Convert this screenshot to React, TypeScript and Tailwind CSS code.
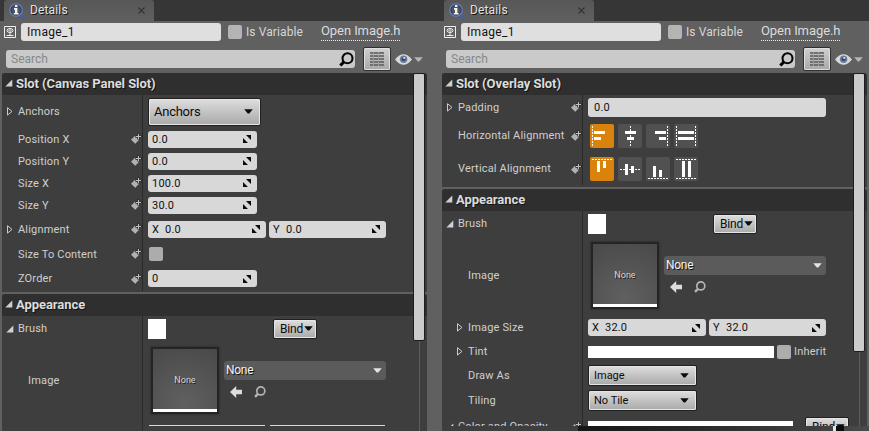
import type { ReactNode } from "react";
import { clsx } from "clsx";

const SHADOW = "[text-shadow:1px_1px_0_#141414]";

function Caret({ className = "" }: { className?: string }) {
  return (
    <svg className={clsx("h-[5px] w-[9px] shrink-0", className)} viewBox="0 0 9 5" fill="currentColor">
      <path d="M0.3 0.3h8.4L5.3 4.5H3.7z" />
    </svg>
  );
}

function Expander({ open }: { open?: boolean }) {
  return open ? (
    <svg className="h-[8px] w-[8px] shrink-0 text-[#d0d0d0]" viewBox="0 0 8 8">
      <path d="M7.3 0.5v7H0.3z" fill="currentColor" />
    </svg>
  ) : (
    <svg className="h-[9px] w-[6px] shrink-0" viewBox="0 0 6 9">
      <path d="M0.5 0.7v7.4L5 4.4z" fill="none" stroke="#cccccc" strokeWidth="1" />
    </svg>
  );
}

function KeyIcon() {
  return (
    <svg className="h-[12px] w-[12px] shrink-0" viewBox="0 0 12 12">
      <path d="M5 2.2L9.6 6.8 5.2 11.2 0.6 6.8z" fill="#b0b0b0" stroke="#262626" strokeWidth="0.6" />
      <path d="M8.5 0v6.4M5.4 3.5h6.6" stroke="#303030" strokeWidth="2.4" />
      <path d="M8.5 1v5M6 3.5h5" stroke="#c0c0c0" strokeWidth="1" />
    </svg>
  );
}

function Spin() {
  return (
    <svg className="h-[8px] w-[8px] shrink-0" viewBox="0 0 8 8" fill="#0a0a0a">
      <path d="M3 0H8v5zM0 3V8h5z" />
      <path d="M2.4 3.4L4.6 5.6M3.4 2.4L5.6 4.6" stroke="#d8d8d8" strokeWidth="0.8" />
    </svg>
  );
}

function Magnifier({ className = "" }: { className?: string }) {
  return (
    <svg className={clsx("shrink-0", className)} viewBox="0 0 15 15" fill="none" stroke="currentColor">
      <circle cx="8.5" cy="6.2" r="5" strokeWidth="2.1" />
      <path d="M5.2 9.6L1.3 13.5" strokeWidth="3" />
    </svg>
  );
}

function DetailsIcon() {
  return (
    <svg className="h-[16px] w-[16px] shrink-0" viewBox="0 0 16 16">
      <path d="M11 11l4 4" stroke="#3e5fae" strokeWidth="2.6" />
      <circle cx="7" cy="7" r="6.2" fill="#4d5360" stroke="#5f82d2" strokeWidth="1.3" />
      <circle cx="7" cy="7" r="5.1" fill="none" stroke="#252b38" strokeWidth="0.6" />
      <path d="M6 2h2.4v2H6zM5 5.1h3.4v4.8h1.2v1.6H4.8V9.9H6V6.7H5z" fill="#f2f2f2" />
    </svg>
  );
}

function WidgetIcon() {
  return (
    <svg className="h-[12px] w-[12px] shrink-0" viewBox="0 0 12 12" fill="none" stroke="#f0f0f0">
      <path d="M0.5 0.5h11v11H0.5z" strokeWidth="1" />
      <ellipse cx="6" cy="4.5" rx="3" ry="2" strokeWidth="1" />
      <path d="M4.5 4.5h1M6.5 4.5h1M5.5 3.5h1M5.5 5.5h1M6 6.5v3M2.5 9.5h7" strokeWidth="1" />
    </svg>
  );
}

function Field({ axis, value, className }: { axis?: string; value: string; className: string }) {
  return (
    <div className={clsx("flex h-[17px] shrink-0 items-center rounded-[3px] bg-[#d8d8d8] pl-[4px] pr-[6px] text-[11px] tracking-[0.2px] text-[#111]", className)}>
      {axis && <span className="w-[13px]">{axis}</span>}
      <span className="flex-1">{value}</span>
      <Spin />
    </div>
  );
}

function Check({ className = "bg-[#acacac]" }: { className?: string }) {
  return <span className={clsx("block size-[14px] shrink-0 rounded-[2px]", className)} />;
}

const BTN =
  "flex shrink-0 items-center rounded-[2px] border border-[#202020] bg-gradient-to-b from-[#dedede] to-[#a9a9a9] text-[#0c0c0c] shadow-[inset_0_0_0_1px_#e6e6e6]";

function Combo({ label, className }: { label: string; className: string }) {
  return (
    <button className={clsx(BTN, "justify-between pl-[5px] pr-[7px]", className)}>
      <span>{label}</span>
      <Caret />
    </button>
  );
}

function Bind({ className = "" }: { className?: string }) {
  return (
    <button className={clsx(BTN, "h-[20px] w-[44px] gap-[2px] pl-[6px] text-[12px]", className)}>
      <span className="w-[22px] text-left tracking-[-0.15px]">Bind</span>
      <Caret />
    </button>
  );
}

type RowProps = {
  label: string;
  height: string;
  state?: "open" | "closed";
  nested?: boolean;
  keyed?: boolean;
  children?: ReactNode;
};

function Row({ label, height, state, nested, keyed, children }: RowProps) {
  return (
    <div className={clsx("flex shrink-0", height)}>
      <div className="flex w-[141px] shrink-0 items-center border-r border-[#2a2a2a]">
        <span className={clsx("flex shrink-0", nested ? "w-[26px] pl-[15px]" : "w-[16px]", !nested && (state === "open" ? "pl-[4px]" : "pl-[5px]"))}>
          {state && <Expander open={state === "open"} />}
        </span>
        <span className="flex-1 whitespace-nowrap text-[11px] tracking-[0.17px] text-[#cfcfcf]">{label}</span>
        {keyed && <KeyIcon />}
      </div>
      <div className="flex flex-1 items-center pl-[5px]">{children}</div>
    </div>
  );
}

function Section({ title, children, grow }: { title: string; children: ReactNode; grow?: boolean }) {
  return (
    <section className={clsx("flex shrink-0 flex-col overflow-hidden rounded-t-[3px] bg-[#3e3e3e]", grow && "h-[260px]")}>
      <h2 className={clsx("flex h-[22px] shrink-0 items-center gap-[3px] bg-[#2f2f2f] pb-[2px] pl-[3px] text-[13px] font-bold tracking-[-0.06px] text-[#dcdcdc]", SHADOW)}>
        <Expander open />
        <span>{title}</span>
      </h2>
      {children}
    </section>
  );
}

function BrushRows() {
  return (
    <>
      <Row label="Brush" state="open" height="h-[25px]">
        <span className="h-[20px] w-[18px] bg-white" />
        <Bind className="ml-[107px]" />
      </Row>
      <Row label="Image" nested height="h-[79px]">
        <div className="ml-[3px] flex h-[67px] w-[68px] flex-col border-2 border-[#242424] bg-[radial-gradient(circle_at_50%_85%,#606060,#494949)] shadow-[0_0_2px_#222]">
          <span className="flex flex-1 items-center justify-center pt-[3px] text-[9px] text-[#d6d6d6] [text-shadow:1px_1px_0_#222]">None</span>
          <span className="h-[3px] bg-white" />
        </div>
        <div className="ml-[5px] flex flex-col gap-[4px]">
          <div className="flex h-[19px] w-[162px] items-center justify-between rounded-[3px] bg-[#5b5b5b] pl-[2px] pr-[4px] text-[12px] tracking-[-0.3px] text-[#f2f2f2]">
            <span className={clsx("-mt-[2px]", SHADOW)}>None</span>
            <Caret className="text-[#e4e4e4]" />
          </div>
          <div className="flex h-[16px] items-center gap-[12px] pl-[6px]">
            <svg className="h-[12px] w-[12px]" viewBox="0 0 12 12" fill="#dddddd">
              <path d="M0 6L6.2 0v3.8H12v4.4H6.2V12z" />
            </svg>
            <Magnifier className="size-[12px] text-[#b4b4b4]" />
          </div>
        </div>
      </Row>
    </>
  );
}

const ALIGN_ICONS = [
  ["M2.5 2v20", "M4 7h11v3H4zM4 13h7v3H4z"],
  ["M12.5 2v20", "M7 7h11v3H7zM9 13h7v3H9z"],
  ["M21.5 2v20", "M9 7h11v3H9zM13 13h7v3h-7z"],
  ["M2.5 2v20M21.5 2v20", "M4 7h16v3H4zM4 13h16v3H4z"],
  ["M2 2.5h20", "M7 4h3v11H7zM13 4h3v7h-3z"],
  ["M2 12.5h20", "M7 7h3v11H7zM13 9h3v7h-3z"],
  ["M2 21.5h20", "M7 9h3v11H7zM13 13h3v7h-3z"],
  ["M2 2.5h20M2 21.5h20", "M8 4h3v16H8zM14 4h3v16h-3z"],
];

function AlignButtons({ icons }: { icons: string[][] }) {
  return (
    <div className="ml-[2px] flex gap-[4px]">
      {icons.map(([guide, bars], i) => (
        <svg key={bars} viewBox="0 0 24 24" className={clsx("size-[24px] rounded-[2px]", i === 0 ? "bg-[#d9830c]" : "bg-[#515151]")}>
          <path d={guide} stroke="#fff" strokeWidth="1" strokeDasharray="2 1" />
          <path d={bars} fill="#fff" />
        </svg>
      ))}
    </div>
  );
}

function Panel({ thumb, children }: { thumb: string; children: ReactNode }) {
  return (
    <div className="relative flex h-[431px] w-[440px] shrink-0 flex-col overflow-hidden">
      <div className="flex h-[21px] shrink-0 bg-[#363636] pl-[4px]">
        <div className="flex w-[150px] items-center rounded-t-[3px] bg-gradient-to-b from-[#575757] to-[#606060] pl-[5px] pr-[9px]">
          <DetailsIcon />
          <span className={clsx("ml-[5px] mt-[-2px] flex-1 text-[12px] tracking-[0.15px] text-[#e2e2e2]", SHADOW)}>Details</span>
          <svg className="size-[7px]" viewBox="0 0 7 7">
            <path d="M0.5 0.5l6 6M6.5 0.5l-6 6" stroke="#333" strokeWidth="1.1" />
          </svg>
        </div>
      </div>
      <div className="flex h-[22px] shrink-0 items-center pl-[4px]">
        <WidgetIcon />
        <div className="ml-[5px] flex h-[18px] w-[200px] items-center rounded-[3px] bg-[#dfdfdf] pl-[6px] text-[12px] tracking-[0.3px] text-[#111]">Image_1</div>
        <Check className="ml-[7px] bg-[#b4b4b4]" />
        <span className="ml-[4px] w-[57px] whitespace-nowrap text-[12px] tracking-[0.1px] text-[#d6d6d6]">Is Variable</span>
        <span className="ml-[18px] mt-[-1px] border-b border-dotted border-[#eeeeee] text-[13px] leading-[18px] tracking-[-0.08px] text-[#dcdcdc]">Open Image.h</span>
      </div>
      <div className="flex h-[30px] shrink-0 items-center pl-[6px] pt-[2px]">
        <div className="flex h-[18px] w-[349px] items-center justify-between rounded-[3px] bg-[#cacaca] pl-[5px] pr-px text-[12px] text-[#888]">
          <span>Search</span>
          <Magnifier className="size-[15px] text-[#050505]" />
        </div>
        <div className="ml-[8px] flex h-[24px] w-[28px] items-center justify-center rounded-[2px] border border-[#303030] bg-gradient-to-b from-[#d0d0d0] to-[#a8a8a8] shadow-[inset_0_0_0_1px_#dedede]">
          <svg className="h-[14px] w-[14px]" viewBox="0 0 14 14" fill="none" stroke="#707070">
            <path d="M0 1h14M0 4h14M0 7h14M0 10h14M0 13h14" strokeWidth="2" />
            <path d="M3.5 0v14M8.5 0v14" stroke="#9a9a9a" />
          </svg>
        </div>
        <svg className="ml-[4px] h-[11px] w-[17px]" viewBox="0 0 17 11">
          <path d="M0 5.5Q8.5-5 17 5.5Q8.5 16 0 5.5z" fill="#d8d8d8" />
          <circle cx="8.6" cy="5.3" r="3.7" fill="#667da3" />
          <circle cx="8.6" cy="5.3" r="1.8" fill="#35435d" />
          <circle cx="9.2" cy="4" r="0.9" fill="#e9eef6" />
        </svg>
        <Caret className="ml-[2px] text-[#b4b4b4]" />
      </div>
      <div className="ml-[2px] flex h-[353px] w-[425px] shrink-0 flex-col gap-[2px] overflow-hidden">{children}</div>
      <div className="ml-[2px] flex h-[5px] w-[425px] shrink-0 bg-[#3e3e3e]">
        <span className="w-[141px] border-r border-[#2a2a2a]" />
      </div>
      <span className="absolute bottom-0 left-[419px] top-[73px] w-px bg-[#5c5c5c]" />
      <span className={clsx("absolute left-[413px] top-[73px] w-[12px] rounded-[2px] border border-[#1d1d1d] bg-[#cbcbcb]", thumb)} />
    </div>
  );
}

export default function App() {
  return (
    <div className="relative flex h-[431px] w-[869px] overflow-hidden bg-[#606060] font-['Roboto','Liberation_Sans',sans-serif] leading-none">
      <Panel thumb="h-[268px]">
        <Section title="Slot (Canvas Panel Slot)">
          <Row label="Anchors" state="closed" height="h-[33px]">
            <Combo label="Anchors" className="h-[28px] w-[113px] text-[13px] tracking-[-0.25px]" />
          </Row>
          {[["Position X", "0.0"], ["Position Y", "0.0"], ["Size X", "100.0"], ["Size Y", "30.0"]].map(([label, value]) => (
            <Row key={label} label={label} height="h-[22px]" keyed>
              <Field value={value} className="w-[109px]" />
            </Row>
          ))}
          <Row label="Alignment" state="closed" height="h-[26px]" keyed>
            <Field axis="X" value="0.0" className="w-[118px]" />
            <Field axis="Y" value="0.0" className="ml-[3px] w-[117px]" />
          </Row>
          <Row label="Size To Content" height="h-[24px]" keyed>
            <Check className="ml-px bg-[#acacac]" />
          </Row>
          <Row label="ZOrder" height="h-[25px]" keyed>
            <Field value="0" className="w-[109px]" />
          </Row>
          <div className="h-px" />
        </Section>
        <Section title="Appearance" grow>
          <BrushRows />
          <Row label="" height="h-[11px]">
            <div className="flex h-full items-start gap-[5px] pl-px pt-[5px]">
              <span className="h-px w-[116px] bg-[#d8d8d8]" />
              <span className="h-px w-[115px] bg-[#d8d8d8]" />
            </div>
          </Row>
        </Section>
      </Panel>
      <Panel thumb="h-[279px]">
        <Section title="Slot (Overlay Slot)">
          <Row label="Padding" state="closed" height="h-[24px]" keyed>
            <div className="flex h-[19px] w-[238px] items-center rounded-[3px] bg-[#d8d8d8] pl-[6px] text-[11px] tracking-[0.2px] text-[#111]">0.0</div>
          </Row>
          <Row label="Horizontal Alignment" height="h-[33px]" keyed>
            <AlignButtons icons={ALIGN_ICONS.slice(0, 4)} />
          </Row>
          <Row label="Vertical Alignment" height="h-[33px]" keyed>
            <AlignButtons icons={ALIGN_ICONS.slice(4)} />
          </Row>
          <div className="h-[2px]" />
        </Section>
        <Section title="Appearance" grow>
          <BrushRows />
          <Row label="Image Size" nested state="closed" height="h-[25px]">
            <Field axis="X" value="32.0" className="w-[118px]" />
            <Field axis="Y" value="32.0" className="ml-[3px] w-[117px]" />
          </Row>
          <Row label="Tint" nested state="closed" height="h-[23px]">
            <span className="h-[12px] w-[186px] bg-white" />
            <Check className="ml-[3px] bg-[#acacac]" />
            <span className="ml-[3px] text-[11px] tracking-[0.2px] text-[#cfcfcf]">Inherit</span>
          </Row>
          <Row label="Draw As" nested height="h-[24px]">
            <Combo label="Image" className="h-[21px] w-[109px] text-[11px]" />
          </Row>
          <Row label="Tiling" nested height="h-[27px]">
            <Combo label="No Tile" className="h-[21px] w-[109px] text-[11px]" />
          </Row>
          <Row label="Color and Opacity" state="open" height="h-[25px]" keyed>
            <span className="h-[12px] w-[205px] bg-white" />
            <Bind className="ml-[12px]" />
          </Row>
        </Section>
      </Panel>
      <span className="absolute bottom-0 right-0 flex h-[5px] w-[291px] bg-gradient-to-r from-[#161616] to-[#4a4a4a] pl-[255px]">
        <span className="w-[3px] bg-[#e6e6e6]" />
        <span className="w-[8px] bg-[#0c0c0c]" />
      </span>
    </div>
  );
}
